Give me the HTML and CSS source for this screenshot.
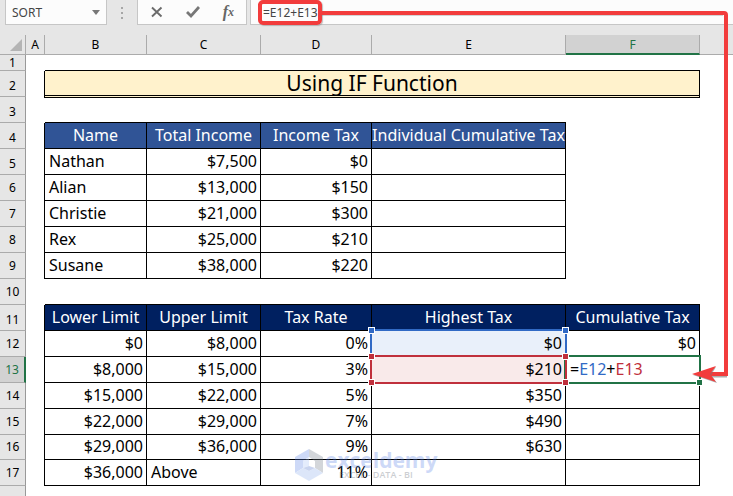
FILE: index.html
```html
<!DOCTYPE html>
<html lang="en">
<head>
<meta charset="utf-8">
<title>Using IF Function</title>
<link rel="stylesheet" href="styles.css">
</head>
<body>
<main class="workbook">
  <header class="formula-bar">
    <div class="name-box">
      <input class="name-input" type="text" value="SORT" aria-label="Name box">
      <button class="name-toggle" type="button" aria-label="Show names">
        <svg width="8" height="5" viewBox="0 0 8 5"><path d="M0 0h8L4 5z" fill="#777"/></svg>
      </button>
    </div>
    <svg class="grip" width="2" height="12" viewBox="0 0 2 12"><path d="M0 0h2v2H0zM0 5h2v2H0zM0 10h2v2H0z" fill="#a6a6a6"/></svg>
    <div class="actions">
      <button type="button" aria-label="Cancel">
        <svg width="14" height="14" viewBox="0 0 14 14"><path d="M2 2.500 11.500 11.500M11.500 2.500 2 11.500" stroke="#6b6b6b" stroke-width="1.900" fill="none"/></svg>
      </button>
      <button type="button" aria-label="Enter">
        <svg width="14" height="14" viewBox="0 0 14 14"><path d="M1 7 5 11 13 2" stroke="#777" stroke-width="2.800" fill="none"/></svg>
      </button>
      <button class="fx" type="button" aria-label="Insert function">f<sub>x</sub></button>
    </div>
    <div class="formula">
      <input class="formula-input" type="text" value="=E12+E13" aria-label="Formula">
    </div>
  </header>

  <table class="sheet">
    <colgroup>
      <col class="w-num"><col class="w-a"><col class="w-b"><col class="w-c"><col class="w-d"><col class="w-e"><col class="w-f"><col>
    </colgroup>
    <thead>
      <tr>
        <th class="corner"><svg width="12" height="12" viewBox="0 0 12 12"><path d="M12 0v12H0z" fill="#b4b4b4"/></svg></th>
        <th>A</th><th>B</th><th>C</th><th>D</th><th>E</th><th class="active">F</th><th class="rest"></th>
      </tr>
    </thead>
    <tbody>
      <tr class="first"><th>1</th><td></td><td class="above" colspan="5"></td><td></td></tr>
      <tr class="low"><th>2</th><td class="edge"></td><td class="title" colspan="5">Using IF Function</td><td></td></tr>
      <tr class="low"><th>3</th><td></td><td class="above" colspan="4"></td><td></td><td></td></tr>
      <tr class="low income"><th>4</th><td class="edge"></td><td class="head">Name</td><td class="head">Total Income</td><td class="head">Income Tax</td><td class="head">Individual Cumulative Tax</td><td></td><td></td></tr>
      <tr class="low"><th>5</th><td class="edge"></td><td class="cell text">Nathan</td><td class="cell">$7,500</td><td class="cell">$0</td><td class="cell"></td><td></td><td></td></tr>
      <tr><th>6</th><td class="edge"></td><td class="cell text">Alian</td><td class="cell">$13,000</td><td class="cell">$150</td><td class="cell"></td><td></td><td></td></tr>
      <tr><th>7</th><td class="edge"></td><td class="cell text">Christie</td><td class="cell">$21,000</td><td class="cell">$300</td><td class="cell"></td><td></td><td></td></tr>
      <tr><th>8</th><td class="edge"></td><td class="cell text">Rex</td><td class="cell">$25,000</td><td class="cell">$210</td><td class="cell"></td><td></td><td></td></tr>
      <tr><th>9</th><td class="edge"></td><td class="cell text">Susane</td><td class="cell">$38,000</td><td class="cell">$220</td><td class="cell"></td><td></td><td></td></tr>
      <tr><th>10</th><td></td><td class="above" colspan="5"></td><td></td></tr>
      <tr class="low limits"><th>11</th><td class="edge"></td><td class="head">Lower Limit</td><td class="head">Upper Limit</td><td class="head">Tax Rate</td><td class="head">Highest Tax</td><td class="head">Cumulative Tax</td><td></td></tr>
      <tr><th>12</th><td class="edge"></td><td class="cell">$0</td><td class="cell">$8,000</td><td class="cell">0%</td><td class="cell ref blue">$0<span class="range"><i></i><i></i></span></td><td class="cell">$0</td><td></td></tr>
      <tr><th class="active">13</th><td class="edge"></td><td class="cell">$8,000</td><td class="cell">$15,000</td><td class="cell">3%</td><td class="cell ref red">$210<span class="range"><i></i><i></i><i></i><i></i></span></td><td class="cell text ref editing">=<span class="ref-blue">E12</span>+<span class="ref-red">E13</span><span class="range"><i></i></span></td><td></td></tr>
      <tr><th>14</th><td class="edge"></td><td class="cell">$15,000</td><td class="cell">$22,000</td><td class="cell">5%</td><td class="cell">$350</td><td class="cell"></td><td></td></tr>
      <tr><th>15</th><td class="edge"></td><td class="cell">$22,000</td><td class="cell">$29,000</td><td class="cell">7%</td><td class="cell">$490</td><td class="cell"></td><td></td></tr>
      <tr class="short"><th>16</th><td class="edge"></td><td class="cell">$29,000</td><td class="cell">$36,000</td><td class="cell">9%</td><td class="cell">$630</td><td class="cell"></td><td></td></tr>
      <tr><th>17</th><td class="edge"></td><td class="cell">$36,000</td><td class="cell text">Above</td><td class="cell mark-host">11%
        <span class="watermark">
          <svg width="28" height="32" viewBox="0 0 28 32"><path d="M14 0 0 8v16l8-5V12l6-4z" fill="#5b84e8"/><path d="M14 0 28 8v16l-8-5V12l-6-4z" fill="#6f7a88"/><path d="M0 24 14 32 28 24 20 19 14 22 8 19z" fill="#8fb0ee"/><path d="M14 8v9l-6 2V12z" fill="#a9c2f6"/><path d="M14 17l6 2-6 3-6-3z" fill="#4f74cc"/></svg>
          <span class="mark-text"><b>exceldemy</b><small>EXCEL - DATA - BI</small></span>
        </span></td><td class="cell"></td><td class="cell"></td><td></td></tr>
      <tr class="last"><th></th><td></td><td></td><td></td><td></td><td></td><td></td><td></td></tr>
    </tbody>
  </table>

  <span class="callout"></span>
  <svg class="arrow" width="416" height="386" viewBox="0 0 416 386" aria-hidden="true">
    <path d="M3 14H405M409 376H390" fill="none" stroke="#777" stroke-opacity=".6" stroke-width="3"/>
    <path d="M3 13H406Q408 13 408 15V374H390" fill="none" stroke="#f23c3c" stroke-width="4"/>
    <path d="M375 375 398 367 393 375 399 383z" fill="#777" fill-opacity=".6"/>
    <path d="M374 374 398 366 392 374 398 382z" fill="#f23c3c"/>
  </svg>
</main>
</body>
</html>
```

FILE: styles.css
```css
*, ::before, ::after { box-sizing: border-box; }

body {
  margin: 0;
  background: #fff;
  color: #000;
  font-family: "Comic Sans MS", "Noto Sans", sans-serif;
  font-size: 16px;
}

.workbook {
  position: relative;
  min-height: 100vh;
  overflow: hidden;
}

button, input {
  margin: 0;
  padding: 0;
  border: 0;
  outline: 0;
  background: transparent;
  color: #444;
  font-family: "Noto Sans", sans-serif;
  font-size: 12px;
}

/* Formula bar */
.formula-bar {
  display: flex;
  align-items: stretch;
  height: 35px;
  padding: 0 0 10px 5px;
  background: #e6e6e6;
}

.name-box, .actions, .formula {
  display: flex;
  align-items: center;
  background: #fcfcfc;
  border: 1px solid #c6c6c6;
  border-top: 0;
}

.name-box { width: 102px; padding: 0 6px; }
.name-input { flex: 1; min-width: 0; }
.name-toggle { display: flex; }
.grip { align-self: center; margin: 0 14px; }

.actions {
  width: 110px;
  justify-content: space-between;
  padding: 0 12px;
}

.actions button { display: flex; }

.actions .fx {
  font-family: "Liberation Serif", serif;
  font-size: 16px;
  font-style: italic;
  font-weight: 700;
  line-height: 16px;
  color: #666;
}

.fx sub { font-size: 12px; line-height: 16px; }

.formula {
  flex: 1;
  margin-left: 3px;
  padding-left: 12px;
  border-right: 0;
}

.formula-input { width: 100%; }

/* Grid */
.sheet {
  width: 100%;
  table-layout: fixed;
  border-collapse: separate;
  border-spacing: 0;
}

.w-num { width: 26px; }
.w-a { width: 19px; }
.w-b { width: 102px; }
.w-c { width: 114px; }
.w-d { width: 111px; }
.w-e { width: 194px; }
.w-f { width: 134px; }

.sheet tr { height: 26px; }
.sheet thead tr { height: 20px; }
.sheet .first { height: 16px; }
.sheet .short { height: 25px; }
.sheet .last { height: 10px; }

.sheet th {
  padding: 0;
  background: #e6e6e6;
  border-right: 1px solid #ababab;
  border-bottom: 1px solid #ababab;
  font-family: "Noto Sans", sans-serif;
  font-size: 12px;
  font-weight: 400;
  line-height: 14px;
  text-align: center;
}

.sheet tbody th { border-right-color: #999; }
.sheet .low th { padding-top: 5px; }
.sheet thead .rest { border-right: 0; }
.sheet .corner { text-align: right; padding-right: 3px; }
.corner svg { display: block; margin-left: auto; }
.sheet .last th { border-bottom: 0; }

.sheet .active { background: #d2d2d2; color: #217346; }
.sheet thead .active { padding-top: 1px; border-bottom: 2px solid #217346; }
.sheet tbody .active { border-right: 2px solid #217346; }

.sheet td {
  padding: 0;
  line-height: 22px;
  white-space: nowrap;
}

.sheet .edge { border-right: 1px solid #000; }
.sheet .above { border-bottom: 1px solid #000; }

.sheet .title {
  position: relative;
  z-index: 0;
  padding-bottom: 2px;
  background: #fff2cc;
  border-right: 1px solid #000;
  font-size: 21px;
  text-align: center;
}

.title::after {
  content: "";
  position: absolute;
  z-index: -1;
  right: -1px;
  bottom: -1px;
  left: -1px;
  height: 3px;
  border: 1px solid #000;
  background: #fff2cc;
}

.sheet .head, .sheet .cell {
  padding-bottom: 2px;
  border-right: 1px solid #000;
  border-bottom: 1px solid #000;
}

.sheet .head { color: #fff; text-align: center; }
.income .head { background: #305496; }
.limits .head { background: #002060; }
.sheet .cell { padding-right: 3px; text-align: right; }
.sheet .text { padding-left: 4px; text-align: left; }

/* Referenced ranges and the cell being edited */
.ref { position: relative; }
.sheet .blue { background: #e9f0fa; }
.sheet .red { background: #f9eaea; }
.blue .range { --line: #316ac5; }
.red .range { --line: #c0303c; }
.editing .range { --line: #217346; }
.ref-blue { color: #316ac5; }
.ref-red { color: #c0303c; }

.range {
  position: absolute;
  inset: -2px;
  z-index: 1;
  border: 2px solid var(--line);
}

.blue .range { border-bottom: 0; }
.red .range { z-index: 2; }

.range i {
  position: absolute;
  width: 7px;
  height: 7px;
  border: 1px solid #fff;
  background: var(--line);
}

.range i:nth-child(1) { top: -4px; left: -4px; }
.range i:nth-child(2) { top: -4px; right: -4px; }
.range i:nth-child(3) { bottom: -4px; left: -4px; }
.range i:nth-child(4) { bottom: -4px; right: -4px; }
.editing .range i { inset: auto -4px -4px auto; }

/* Watermark */
.mark-host { position: relative; }

.watermark {
  position: absolute;
  top: -11px;
  left: 34px;
  z-index: 1;
  display: flex;
  gap: 2px;
  opacity: .3;
  font-family: "Open Sans", sans-serif;
  text-align: left;
}

.mark-text { display: flex; flex-direction: column; }
.mark-text b { color: #5b84e8; font-size: 21px; line-height: 22px; }
.mark-text small {
  padding-left: 14px;
  color: #59616e;
  font-size: 9px;
  font-weight: 600;
  line-height: 8px;
}

/* Annotation over the sheet */
.callout {
  position: absolute;
  top: 0;
  left: 258px;
  width: 64px;
  height: 25px;
  border: 4px solid #f23c3c;
  border-radius: 5px;
  box-shadow: 1px 1px 1px #8888;
}

.arrow { position: absolute; top: 0; left: 318px; z-index: 3; }
```
